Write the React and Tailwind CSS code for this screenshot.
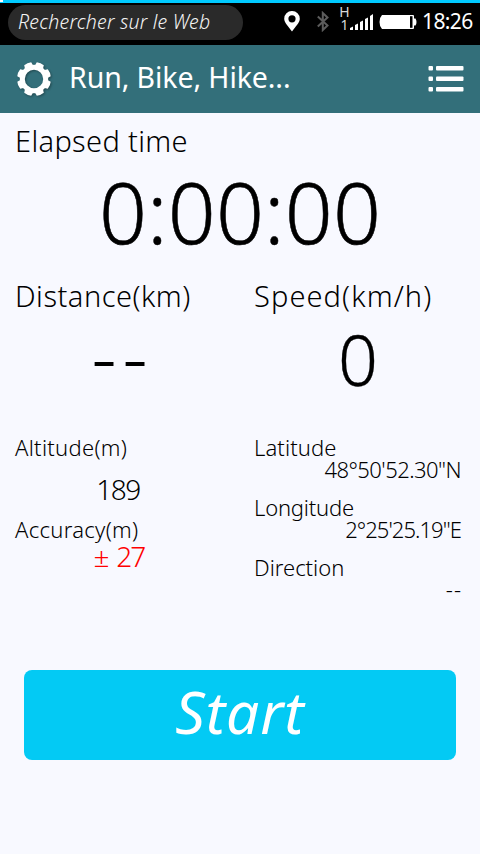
import React from "react";

function StatusBar() {
  return (
    <div className="flex h-[45px] w-full shrink-0 flex-col bg-black">
      <div className="h-[3px] w-full shrink-0 bg-[#00caff]">
        <div className="h-[2px] w-[3px] bg-white" />
      </div>
      <div className="flex h-[42px] w-full pt-[2px]">
        <div className="ml-2 h-[35px] w-[235px] rounded-full bg-[#2a2a2a] pl-[10px]">
          <span className="block whitespace-nowrap text-[19.5px] font-light italic leading-[33px] tracking-[0.23px] text-[#f4f4f4]">
            Rechercher sur le Web
          </span>
        </div>
        <svg className="ml-[41px] mt-[6px] h-[21px] w-[16px] shrink-0" viewBox="0 0 16 21">
          <path
            fill="#fff"
            fillRule="evenodd"
            d="M8 0a7.700 7.700 0 0 0-7.800 7.800C.2 12 4.500 15.500 8 20.500c3.500-5 7.800-8.500 7.800-12.700A7.700 7.700 0 0 0 8 0Zm0 4.200a3.600 3.600 0 1 1 0 7.200 3.600 3.600 0 0 1 0-7.200Z"
          />
        </svg>
        <svg className="ml-[17px] mt-[6px] h-[21px] w-[12px] shrink-0" viewBox="0 0 12 21">
          <path
            fill="none"
            stroke="#5c5c5c"
            strokeWidth="2"
            d="M.8 5.500 10.500 14.500 5.800 19V2l4.700 4.500L.8 15.500"
          />
        </svg>
        <div className="ml-[11px] flex w-[9px] shrink-0 flex-col items-center text-[#d8d8d8]">
          <span className="block h-[13px] text-[14px] font-normal leading-[14px]">H</span>
          <span className="block h-[13px] text-[14px] font-normal leading-[14px]">1</span>
        </div>
        <svg className="ml-[1px] mt-[9px] h-[16px] w-[23px] shrink-0" viewBox="0 0 23 16" fill="#fff">
          <path d="M0 16v-2l3-1.500V16ZM5 16v-5l3-1.500V16ZM10 16V8l3-1.500V16ZM15 16V5l3-1.500V16ZM20 16V2l3-2V16Z" />
        </svg>
        <svg className="ml-[6px] mt-[10px] h-[14px] w-[38px] shrink-0" viewBox="0 0 38 14">
          <path fill="#fff" d="M3 0h31q1 0 1 1v2.500h1.500q1 1.500 1 3.500t-1 3.500H35V13q0 1-1 1H3Q.5 11.500.5 7T3 0Z" />
          <path fill="#000" d="M31 1.200h2.500v11.600H31Z" />
        </svg>
        <span className="ml-[5px] whitespace-nowrap text-[21px] font-normal leading-[32px] tracking-[-0.600px] text-white">
          18:26
        </span>
      </div>
    </div>
  );
}

function GearIcon() {
  return (
    <svg
      className="h-[36px] w-[36px] shrink-0 drop-shadow-[1px_1px_1px_rgba(0,0,0,0.35)]"
      viewBox="-18 -18 36 36"
    >
      <g fill="#fff">
        {[22.5, 67.5, 112.5, 157.5, 202.5, 247.5, 292.5, 337.5].map((a) => (
          <path key={a} transform={`rotate(${a})`} d="M-4.500-12-3.800-16.500q3.800-1.200 7.600 0L4.500-12Z" />
        ))}
      </g>
      <circle r="11.700" fill="none" stroke="#fff" strokeWidth="5" />
    </svg>
  );
}

function MenuIcon() {
  return (
    <svg className="h-[28px] w-[36px] shrink-0" viewBox="0 0 36 28" fill="#fff">
      {[1, 11.6, 22].map((y) => (
        <g key={y}>
          <rect x="0.500" y={y} width="4.500" height="4.500" rx="1" />
          <rect x="8" y={y} width="27.500" height="4.500" rx="1" />
        </g>
      ))}
    </svg>
  );
}

function Header() {
  return (
    <div className="flex h-[68px] w-full shrink-0 items-center bg-[#336f7a] pl-[16px] pr-[16px]">
      <GearIcon />
      <span className="ml-[17px] flex-1 whitespace-nowrap pb-[4px] text-[28.5px] font-normal leading-[40px] tracking-[-0.080px] text-white">
        Run, Bike, Hike...
      </span>
      <MenuIcon />
    </div>
  );
}

export default function App() {
  return (
    <div className="flex h-[854px] w-[480px] flex-col overflow-hidden bg-[#f8f9ff] font-['Noto_Sans','Open_Sans',sans-serif] font-light text-black">
      <StatusBar />
      <Header />

      <div className="flex h-[155px] shrink-0 flex-col whitespace-nowrap">
        <div className="h-[56px] pl-[15px] text-[29px] leading-[56px] tracking-[0.350px]">Elapsed time</div>
        <div className="h-[90px] text-center text-[84px] leading-[86px] tracking-[0.200px] [-webkit-text-stroke:0.500px_black]">
          0:00:00
        </div>
      </div>

      <div className="flex h-[164px] shrink-0 whitespace-nowrap">
        <div className="flex w-[240px] flex-col">
          <div className="h-[56px] pl-[15px] text-[29px] leading-[56px] tracking-[0.500px]">Distance(km)</div>
          <div className="h-[76px] pl-[5px] text-center text-[78px] leading-[62px] tracking-[6px]">--</div>
        </div>
        <div className="flex w-[240px] flex-col">
          <div className="h-[56px] pl-[14px] text-[29px] leading-[56px] tracking-[1.100px]">Speed(km/h)</div>
          <div className="h-[76px] pr-[4px] text-center text-[70px] leading-[71px] [-webkit-text-stroke:0.300px_black]">
            0
          </div>
        </div>
      </div>

      <div className="flex h-[238px] shrink-0 whitespace-nowrap text-[22px]">
        <div className="flex w-[240px] flex-col">
          <div className="h-[32px] pl-[15px] leading-[30px] tracking-[0.300px]">Altitude(m)</div>
          <div className="h-[50px] pr-[4px] text-center text-[28px] leading-[50px] tracking-[-1.500px]">189</div>
          <div className="h-[32px] pl-[15px] leading-[30px] tracking-[0.300px]">Accuracy(m)</div>
          <div className="h-[24px] pr-[2px] text-center text-[28px] leading-[20px] tracking-[-1.800px] [word-spacing:3px] text-[#ff0000]">
            ± 27
          </div>
        </div>
        <div className="flex w-[240px] flex-col">
          <div className="h-[30px] pl-[14px] leading-[30px] tracking-[0.100px]">Latitude</div>
          <div className="h-[30px] pr-[19px] text-right leading-[14px] tracking-[-0.550px]">48°50'52.30"N</div>
          <div className="h-[30px] pl-[14px] leading-[30px] tracking-[-0.200px]">Longitude</div>
          <div className="h-[30px] pr-[19px] text-right leading-[14px] tracking-[-0.950px]">2°25'25.19"E</div>
          <div className="h-[30px] pl-[14px] leading-[30px]">Direction</div>
          <div className="h-[30px] pr-[18px] text-right leading-[14px] tracking-[1px]">--</div>
        </div>
      </div>

      <button className="mx-[24px] block h-[90px] shrink-0 rounded-[8px] bg-[#03caf4] pb-[8px] text-center text-[58.5px] font-normal italic leading-[82px] tracking-[0.900px] text-white">
        Start
      </button>
    </div>
  );
}
